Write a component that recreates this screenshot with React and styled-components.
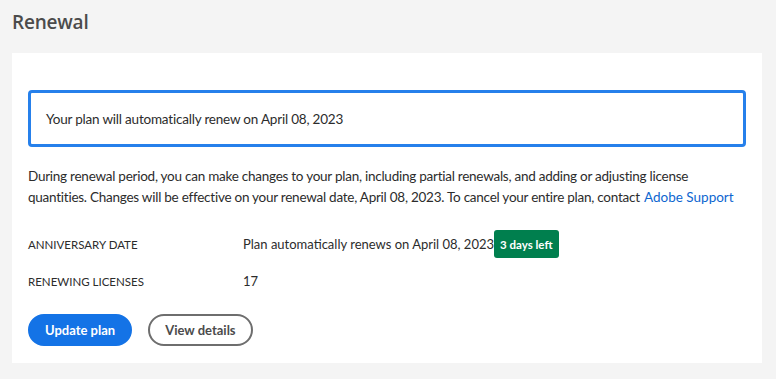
import styled, { createGlobalStyle } from "styled-components";

const GlobalStyle = createGlobalStyle`
  body {
    margin: 0;
    background: #f4f4f4;
    font-family: "Lato", "Open Sans", sans-serif;
    color: #2c2c2c;
  }
`;

const Page = styled.div`
  padding: 10px 14px 16px 12px;
`;

const Title = styled.h2`
  margin: 0 0 19px;
  font-family: "Open Sans", sans-serif;
  font-size: 19px;
  font-weight: 600;
  color: #4b4b4b;
  line-height: 24px;
  letter-spacing: -0.2px;
`;

const Card = styled.section`
  background: #fff;
  padding: 37px 16px 17px;
`;

const Notice = styled.div`
  border: 3px solid #2680eb;
  border-radius: 4px;
  height: 57px;
  box-sizing: border-box;
  display: flex;
  align-items: center;
  padding: 0 15px;
  font-size: 13.5px;
  letter-spacing: -0.2px;
  color: #2c2c2c;
`;

const Paragraph = styled.p`
  margin: 19px 0 22px;
  font-size: 13.5px;
  letter-spacing: -0.25px;
  line-height: 21px;
  color: #2c2c2c;
`;

const SupportLink = styled.a`
  color: #0d66d0;
  text-decoration: none;
  letter-spacing: 0;
  margin-left: 1px;
`;

const Details = styled.div`
  display: grid;
  grid-template-columns: 215px 1fr;
  row-gap: 9px;
  align-items: center;
`;

const Label = styled.div`
  font-size: 11.5px;
  text-transform: uppercase;
  color: #2c2c2c;
  min-height: 28px;
  display: flex;
  align-items: center;
`;

const Value = styled.div`
  font-size: 13px;
  display: flex;
  align-items: center;
  min-height: 28px;
`;

const Badge = styled.span`
  background: #007f4e;
  color: #fff;
  font-size: 11.5px;
  font-weight: 700;
  border-radius: 3px;
  padding: 0 6px;
  height: 28px;
  display: inline-flex;
  align-items: center;
`;

const Actions = styled.div`
  display: flex;
  gap: 16px;
  margin-top: 19px;
`;

const Button = styled.button`
  height: 32px;
  border-radius: 16px;
  padding: 0 ${(p) => (p.$primary ? "15px" : "15px")};
  font-family: inherit;
  font-size: 13px;
  font-weight: 700;
  cursor: pointer;
  border: 2px solid ${(p) => (p.$primary ? "#1473e6" : "#6e6e6e")};
  background: ${(p) => (p.$primary ? "#1473e6" : "#fff")};
  color: ${(p) => (p.$primary ? "#fff" : "#4b4b4b")};
`;

export default function App() {
  return (
    <>
      <GlobalStyle />
      <Page>
        <Title>Renewal</Title>
        <Card>
          <Notice>Your plan will automatically renew on April 08, 2023</Notice>
          <Paragraph>
            During renewal period, you can make changes to your plan, including
            partial renewals, and adding or adjusting license quantities.
            Changes will be effective on your renewal date, April 08, 2023. To
            cancel your entire plan, contact{" "}
            <SupportLink href="#">Adobe Support</SupportLink>
          </Paragraph>
          <Details>
            <Label>Anniversary date</Label>
            <Value>
              Plan automatically renews on April 08, 2023
              <Badge>3 days left</Badge>
            </Value>
            <Label>Renewing licenses</Label>
            <Value>17</Value>
          </Details>
          <Actions>
            <Button $primary>Update plan</Button>
            <Button>View details</Button>
          </Actions>
        </Card>
      </Page>
    </>
  );
}
